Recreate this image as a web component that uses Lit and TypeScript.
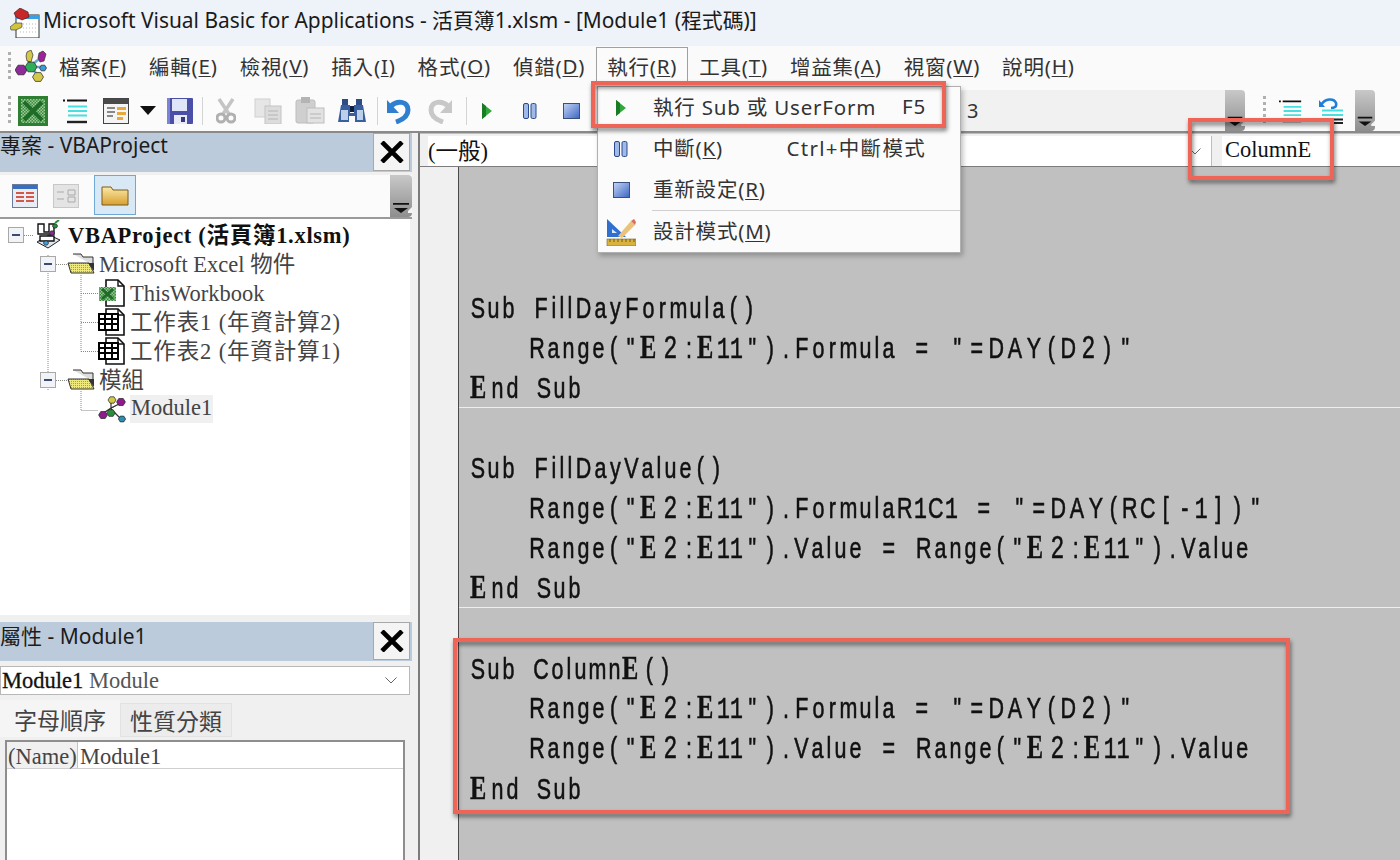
import { LitElement, html, css, svg } from "lit";
import { customElement } from "lit/decorators.js";

const gem = (x: number, y: number, c: string, r = 4) =>
  svg`<polygon points="${x - r},${y} ${x - r / 2},${y - r * 0.8} ${x + r / 2},${y - r * 0.8} ${x + r},${y} ${x + r / 2},${y + r * 0.8} ${x - r / 2},${y + r * 0.8}" fill="${c}" stroke="#222" stroke-width=".7"/>`;

const network = (s: number) => html`<svg width="${s}" height="${s}" viewBox="0 0 32 32">
  <g stroke="#6aa7d8" stroke-width="2.4" fill="none"><path d="M15 16 L8 19 M13 8 L15 15 M18 14 L24 9 M20 17 L27 17 M18 19 L24 27"/></g>
  <polygon points="12,2 16,0 18,5 16,12 12,11 11,6" fill="#d4c84a" stroke="#333" stroke-width=".7"/>
  <polygon points="24,3 28,1 31,4 29,11 25,12 23,8" fill="#a0229a" stroke="#333" stroke-width=".7"/>
  ${gem(6, 20, "#8e2a9a", 6)}${gem(16, 17, "#2fae5a", 6)}${gem(28, 18, "#3a9ad8", 3.5)}${gem(23, 27, "#d4c84a", 5.5)}
</svg>`;

const titleIcon = html`<svg width="30" height="30" viewBox="0 0 30 30">
  <rect x="6" y="7" width="23" height="23" fill="#fff" stroke="#333"/>
  <rect x="6" y="7" width="23" height="4" fill="#3aa0e0"/>
  <path d="M10 16h17M10 20h17M10 24h17" stroke="#bbb" stroke-dasharray="1 2"/>
  <polygon points="4,5 10,0 18,4 19,9 12,12 6,9" fill="#c6282a" stroke="#401010" stroke-width=".6"/>
  <polygon points="0,19 5,15 12,15 12,19 6,22 1,22" fill="#d2c43a" stroke="#333" stroke-width=".6"/>
</svg>`;

const excel = html`<svg width="30" height="30" viewBox="0 0 30 30">
  <defs><pattern id="chk" width="3" height="3" patternUnits="userSpaceOnUse"><rect width="3" height="3" fill="#3c8a3c"/><rect width="1.5" height="1.5" fill="#9ccc9c"/><rect x="1.5" y="1.5" width="1.5" height="1.5" fill="#9ccc9c"/></pattern></defs>
  <rect width="30" height="30" fill="#2f7f33"/><rect x="3" y="3" width="24" height="24" fill="url(#chk)"/>
  <path d="M6 6 L24 24 M24 6 L6 24" stroke="#1f6b28" stroke-width="4"/>
</svg>`;

const indent = (s = 26) => html`<svg width="${s}" height="${s}" viewBox="0 0 26 26">
  <path d="M0 2.5h2M4 2.5h20" stroke="#111" stroke-width="2"/>
  <path d="M5 8.5h19M5 13h19M5 17.5h19" stroke="#47dfe0" stroke-width="2"/>
  <path d="M4 24h20" stroke="#222" stroke-width="2.4"/>
</svg>`;

const windowIcon = html`<svg width="26" height="26" viewBox="0 0 26 26">
  <rect x=".5" y=".5" width="25" height="25" fill="#f4f4f4" stroke="#444"/>
  <rect x="1" y="1" width="24" height="5" fill="#4a4a4a"/>
  <path d="M4 10h8M4 14h8M4 18h6" stroke="#888" stroke-width="2"/>
  <rect x="14" y="9" width="9" height="3" fill="#e8a83a"/><rect x="14" y="14" width="9" height="3" fill="#e8a83a"/><rect x="14" y="19" width="6" height="3" fill="#e8a83a"/>
</svg>`;

const drop = html`<svg width="16" height="9" viewBox="0 0 16 9"><polygon points="0,0 16,0 8,9" fill="#111"/></svg>`;

const save = html`<svg width="26" height="26" viewBox="0 0 26 26">
  <rect width="26" height="26" rx="1" fill="#4a4fa8"/>
  <rect x="5" y="1" width="15" height="12" fill="#dfe6f7"/><rect x="7" y="17" width="13" height="9" fill="#e8ebf5"/>
  <rect x="14" y="19" width="4" height="5" fill="#333a80"/><rect x="0" y="0" width="3" height="26" fill="#7b84d4"/>
</svg>`;

const cut = html`<svg width="20" height="26" viewBox="0 0 20 26">
  <path d="M3 1 L13 16 M17 1 L7 16" stroke="#c4c4c4" stroke-width="3.5"/>
  <circle cx="5" cy="20" r="4" fill="none" stroke="#b0b0b0" stroke-width="3"/><circle cx="15" cy="20" r="4" fill="none" stroke="#b0b0b0" stroke-width="3"/>
</svg>`;

const copy = html`<svg width="28" height="26" viewBox="0 0 28 26">
  <rect x="1" y="1" width="15" height="18" fill="#e6e6e6" stroke="#cfcfcf"/>
  <rect x="11" y="8" width="16" height="18" fill="#dcdcdc" stroke="#c4c4c4"/>
  <path d="M14 13h10M14 17h10M14 21h10" stroke="#b4b4b4"/>
</svg>`;

const paste = html`<svg width="30" height="27" viewBox="0 0 30 27">
  <rect x="1" y="3" width="19" height="23" rx="2" fill="#cfcfcf" stroke="#bdbdbd"/>
  <rect x="6" y="0" width="9" height="6" fill="#b4b4b4"/>
  <rect x="12" y="11" width="17" height="15" fill="#e2e2e2" stroke="#bdbdbd"/>
  <path d="M15 17h11M15 21h11" stroke="#b4b4b4"/>
</svg>`;

const binoculars = html`<svg width="28" height="26" viewBox="0 0 28 26">
  <path d="M4 1h6v6h-6zM18 1h6v6h-6z" fill="#2c4d86"/>
  <path d="M3 7h9v8h4v-8h9l3 17h-11v-6h-6v6h-11z" fill="#3a5f9f"/>
  <path d="M3 12h7v10h-7zM19 12h6v10h-6z" fill="#bcd0ea"/><path d="M12 8h4v6h-4z" fill="#10203f"/>
</svg>`;

const undoIcon = (c1: string, c2: string, cls = "") => html`<svg class="${cls}" width="24" height="26" viewBox="0 0 24 26">
  <path d="M4 8 C10 2 21 3 21 12 C21 19 15 22 9 24" fill="none" stroke="${c1}" stroke-width="5"/>
  <polygon points="0,2 0,15 12,15" fill="${c2}"/>
</svg>`;

const play = (h = 16) => html`<svg width="${h * 0.62}" height="${h}" viewBox="0 0 10 16"><polygon points="0,0 10,8 0,16" fill="#2fa83c"/><polygon points="0,0 4,3 4,13 0,16" fill="#1b7a26"/></svg>`;
const pause = html`<svg width="14" height="16" viewBox="0 0 14 16"><rect x=".5" y=".5" width="5" height="15" rx="1.5" fill="#9fb9e8" stroke="#2a4a8c"/><rect x="8" y=".5" width="5" height="15" rx="1.5" fill="#9fb9e8" stroke="#2a4a8c"/></svg>`;
const stop = html`<svg width="17" height="16" viewBox="0 0 17 16"><defs><linearGradient id="st" x1="0" y1="0" x2="1" y2="1"><stop offset="0" stop-color="#c6d6f4"/><stop offset="1" stop-color="#3c66c4"/></linearGradient></defs><rect x=".5" y=".5" width="16" height="15" fill="url(#st)" stroke="#39507f"/></svg>`;

const design = html`<svg width="30" height="28" viewBox="0 0 30 28">
  <polygon points="1,1 1,19 20,19" fill="#2f6fd0"/><polygon points="6,11 6,15 11,15" fill="#dce8fa"/>
  <path d="M12 18 L25 3 L29 7 L16 20 Z" fill="#e9c27c"/><path d="M25 3l4 4 1-3-2-3z" fill="#d8705a"/>
  <rect x="1" y="21" width="29" height="7" fill="#d8b23c" stroke="#7a6420" stroke-width=".6"/>
  <path d="M4 21v3M8 21v3M12 21v3M16 21v3M20 21v3M24 21v3M28 21v3" stroke="#6a5a20"/>
</svg>`;

const indentOut = html`<svg width="26" height="26" viewBox="0 0 26 26">
  <path d="M2 7 C6 0 15 0 17 5 C18 9 15 10 12 10" fill="none" stroke="#1f7fd8" stroke-width="2.6"/><polygon points="0,2 0,9 6,9" fill="#1f7fd8"/>
  <path d="M3 12.5h21M3 17h21" stroke="#47dfe0" stroke-width="2"/><path d="M10 21.5h14M14 25h10" stroke="#222" stroke-width="1.8"/>
</svg>`;

const grip = html`<svg class="gripper" viewBox="0 0 22 42">
  <path d="M3 28h16v1.8h-16z" fill="#111"/><polygon points="4,33 18,33 11,38" fill="#111"/><polygon points="18,36 22,32 22,38 18,38" fill="#f4f4f4"/>
</svg>`;

const closeBtn = html`<div class="close"><svg width="24" height="22" viewBox="0 0 24 22"><path d="M2 1 L22 21 M22 1 L2 21" stroke="#000" stroke-width="4.6"/></svg></div>`;

const chevron = html`<svg width="12" height="7" viewBox="0 0 12 7"><path d="M.5 .5 L6 6 L11.5 .5" fill="none" stroke="#666"/></svg>`;

const exp = html`<svg class="exp" width="16" height="16" viewBox="0 0 16 16"><rect x=".5" y=".5" width="15" height="15" fill="#f2f3f6" stroke="#a8a8a8"/><rect x="4" y="7" width="8" height="2" fill="#3a4a78"/></svg>`;

const folderOpen = html`<svg width="28" height="22" viewBox="0 0 28 22">
  <defs><pattern id="fy" width="2" height="2" patternUnits="userSpaceOnUse"><rect width="2" height="2" fill="#eee97a"/><rect width="1" height="1" fill="#a8a42c"/></pattern></defs>
  <path d="M6 1h8l2 3h10v7h-2" fill="#ddd" stroke="#333"/>
  <polygon points="1,10 22,10 27,20 4,20" fill="url(#fy)" stroke="#333"/><path d="M21 10h6v8z" fill="#333"/>
</svg>`;

const docExcel = html`<svg width="28" height="28" viewBox="0 0 28 28">
  <path d="M8 1h12l6 6v20h-18z" fill="#fff" stroke="#111" stroke-width="1.6"/><path d="M20 1v6h6" fill="none" stroke="#111" stroke-width="1.4"/>
  <rect x="1" y="8" width="17" height="14" fill="url(#chk)"/><path d="M4 10 L15 20 M15 10 L4 20" stroke="#1f6b28" stroke-width="3"/>
</svg>`;

const sheet = html`<svg width="28" height="28" viewBox="0 0 28 28">
  <path d="M8 1h12l6 6v20h-18z" fill="#fff" stroke="#111" stroke-width="1.6"/><path d="M20 1v6h6" fill="none" stroke="#111" stroke-width="1.4"/>
  <rect x="1" y="6" width="19" height="16" fill="#fff" stroke="#000" stroke-width="2"/>
  <path d="M1 11h19M1 16h19M7 6v16M14 6v16" stroke="#000" stroke-width="2"/>
</svg>`;

const projectIcon = html`<svg width="30" height="30" viewBox="0 0 30 30">
  <path d="M3 22 L14 28 L26 20 L15 15Z" fill="#dfe8f2" stroke="#222"/>
  <path d="M4 4h6v8h5v-8h5v10h-16zM6 16h14v5h-14z" fill="#fff" stroke="#111" stroke-width="1.4"/>
  ${gem(21, 6, "#2a8f3c", 2.6)}${gem(18, 13, "#8e2a9a", 2.6)}${gem(12, 23, "#3aa0d8", 2.6)}
  <path d="M21 3l4-3" stroke="#2a8f3c" stroke-width="2"/>
</svg>`;

const moduleIcon = html`<svg width="28" height="28" viewBox="0 0 28 28">
  <path d="M4 19 L13 13 L23 8 M13 14 L24 25 M13 5 L13 14" stroke="#333" stroke-width="1.2"/>
  ${gem(14, 5, "#d4c84a", 4)}${gem(23, 7, "#8e1a8e", 4.4)}${gem(5, 20, "#8e1a8e", 4.4)}${gem(13, 18, "#2a8f3c", 4.2)}${gem(24, 24, "#2a8fb0", 3.6)}
</svg>`;

const menus: [string, string, string][] = [
  ["檔案(", "F", ")"], ["編輯(", "E", ")"], ["檢視(", "V", ")"], ["插入(", "I", ")"], ["格式(", "O", ")"],
  ["偵錯(", "D", ")"], ["執行(", "R", ")"], ["工具(", "T", ")"], ["增益集(", "A", ")"], ["視窗(", "W", ")"], ["說明(", "H", ")"],
];

type Line = { t: string; ind?: boolean; sep?: boolean };
const code: Line[] = [
  { t: "" }, { t: "" }, { t: "" },
  { t: "Sub FillDayFormula()" },
  { t: 'Range("E2:E11").Formula = "=DAY(D2)"', ind: true },
  { t: "End Sub", sep: true },
  { t: "" },
  { t: "Sub FillDayValue()" },
  { t: 'Range("E2:E11").FormulaR1C1 = "=DAY(RC[-1])"', ind: true },
  { t: 'Range("E2:E11").Value = Range("E2:E11").Value', ind: true },
  { t: "End Sub", sep: true },
  { t: "" },
  { t: "Sub ColumnE()" },
  { t: 'Range("E2:E11").Formula = "=DAY(D2)"', ind: true },
  { t: 'Range("E2:E11").Value = Range("E2:E11").Value', ind: true },
  { t: "End Sub" },
];

// advance of each glyph in the reference's proportional code font, px
const SCALE = 0.74;
const adv: Record<string, number> = {
  i: 8, l: 8, m: 19, r: 13, " ": 16, "(": 15, ")": 17, '"': 19, ":": 16, ".": 14, "=": 20, "-": 20, "[": 18, "]": 21,
  E: 20, "2": 21, "1": 13, S: 16, F: 18, R: 18, V: 17, D: 19, A: 18, Y: 20, C: 18,
};
const glyphs = (t: string) =>
  [...t].map((c) => html`<span class="g ${c === "E" ? "slab" : c === "1" ? "mono" : c === "2" ? "big" : ""}" style="width:${(adv[c] ?? 15) / SCALE}px">${c}</span>`);

@customElement("app-root")
export class AppRoot extends LitElement {
  static styles = css`
    :host { display: block; width: 1400px; height: 860px; overflow: hidden; position: relative; background: #f0f0f0;
      font-family: "Noto Sans", "Noto Sans CJK TC", sans-serif; color: #222; }
    svg { display: block; flex: none; }
    u { text-decoration-thickness: 1px; text-underline-offset: 2px; }
    .page { display: grid; grid-template-rows: 46px 44px 43px 1fr; height: 860px; }
    .title { background: #eef2f9; display: flex; align-items: center; gap: 3px; padding: 0 0 8px 10px; box-sizing: border-box; font-size: 20.9px; color: #1a1a1a; white-space: nowrap; }
    .title svg { margin-top: 8px; }
    .menubar { background: #fafafa; display: flex; align-items: center; font-size: 20.5px; letter-spacing: .8px; color: #333; padding: 0 0 4px 8px; }
    .gripdots { width: 3px; height: 28px; margin-right: 4px; background: repeating-linear-gradient(#b0b0b0 0 3px, transparent 3px 6px); flex: none; }
    .gripdots.tall { height: 30px; }
    .menubar .logo { margin-right: 1px; }
    .mi { padding: 0 10px; height: 38px; display: flex; align-items: center; box-sizing: border-box; border: 1px solid transparent; white-space: nowrap; }
    .mi.on { background: #fbfbfb; border-color: #a0a0a0; border-bottom-color: transparent; }
    .toolbar { display: flex; background: #fafafa; border-bottom: 2px solid #8a8a8a; box-sizing: border-box; height: 43px; }
    .tb { display: flex; align-items: center; height: 41px; background: #fbfbfb; }
    .tb.main { padding-left: 8px; width: 1225px; background: linear-gradient(90deg, #fbfbfb 0 960px, #f1f1f1 960px); box-sizing: border-box; }
    .tb.second { width: 110px; padding-left: 18px; box-sizing: border-box; gap: 0; }
    .slot { display: flex; justify-content: center; flex: none; }
    .w26 { width: 26px; } .w30 { width: 30px; } .w34 { width: 34px; } .w36 { width: 36px; } .w38 { width: 38px; }
    .w40 { width: 40px; } .w42 { width: 42px; } .w44 { width: 44px; } .w46 { width: 46px; } .w52 { width: 52px; }
    .ml4 { margin-left: 4px; }
    .flip { transform: scaleX(-1); }
    .vsep { width: 1px; height: 28px; background: #d4d4d4; flex: none; margin: 0 3px; }
    .pos { margin-left: 381px; font-size: 20px; color: #333; }
    .gripper { background: linear-gradient(#c8c8c8, #8e8e8e); border-radius: 0 4px 4px 0; width: 20px; height: 41px; flex: none; }
    .body { display: grid; grid-template-columns: 412px 8px 1fr; min-height: 0; }
    .left { display: grid; grid-template-rows: 482px 1fr; min-height: 0; }
    .split { background: #f0f0f0; border-right: 2px solid #7c7c7c; box-sizing: border-box; }
    .pane { display: flex; flex-direction: column; min-height: 0; }
    .ptitle { height: 39px; background: #bccbdb; display: flex; align-items: flex-start; justify-content: space-between; font-size: 21px; line-height: 26px; padding: 0 2px 0 0; box-sizing: border-box; color: #1c1c1c; flex: none; white-space: nowrap; }
    .ptitle span { margin-top: -1px; }
    .props .ptitle { margin-top: 7px; }
    .props .ptitle span { margin-top: 1px; }
    .close { width: 37px; height: 38px; background: #f4f4f4; border: 1px solid #a8a8a8; display: flex; align-items: center; justify-content: center; box-sizing: border-box; }
    .ptools { height: 44px; margin-top: 3px; display: flex; align-items: center; justify-content: space-between; background: #fbfbfb; border-bottom: 2px solid #9a9a9a; box-sizing: border-box; flex: none; }
    .ptools .gripper { width: 22px; height: 42px; }
    .ptools .l { display: flex; align-items: center; padding-left: 12px; gap: 15px; height: 100%; }
    .active { width: 42px; height: 40px; margin-top: -3px; background: #d8e8f5; border: 1px solid #6fa8d4; box-sizing: border-box; display: flex; align-items: center; justify-content: center; }
    .tree { position: relative; background: #fff; flex: 1; margin-right: 2px; padding-top: 1px; font-family: "Liberation Serif", "Noto Sans CJK TC", serif; font-size: 22.5px; color: #444; }
    .tree svg.lines { position: absolute; left: 0; top: 0; }
    .row { height: 29px; display: flex; align-items: center; white-space: nowrap; box-sizing: border-box; }
    .row > span { line-height: 1; margin-top: 3px; }
    .row.l0 { padding-left: 34px; font-weight: bold; color: #111; gap: 4px; letter-spacing: .7px; }
    .row.l1 { padding-left: 67px; gap: 4px; }
    .row.l2 { padding-left: 98px; gap: 4px; }
    .cjk { letter-spacing: .85px; }
    .row .exp { position: absolute; }
    .row.l0 .exp { left: 8px; }
    .row.l1 .exp { left: 40px; }
    .row > span.hl { background: #f0f0f0; padding: 0 1px; height: 28px; margin-top: 0; display: flex; align-items: center; }
    .pcombo { height: 29px; margin: 5px 2px 0 0; background: #fff; border: 1px solid #b8b8b8; box-sizing: border-box; display: flex; align-items: center; justify-content: space-between; padding: 0 12px 0 1px; font: 22.5px "Liberation Serif", "Noto Sans CJK TC", serif; color: #555; flex: none; }
    .pcombo b { color: #111; font-weight: normal; -webkit-text-stroke: .3px #111; }
    .tabs { display: flex; font-size: 23px; height: 37px; align-items: flex-end; margin-top: 5px; font-family: "Liberation Serif", "Noto Sans CJK TC", serif; color: #444; flex: none; }
    .tab { height: 37px; width: 120px; display: flex; align-items: center; justify-content: center; background: #f5f5f5; box-sizing: border-box; }
    .tab.off { height: 34px; width: 112px; background: #ececec; border: 1px solid #e2e2e2; }
    .grid { margin: 3px 7px 0 5px; flex: 1; background: #fff; border: 2px solid #8e8e8e; border-bottom: 0; font: 22.5px "Liberation Serif", serif; color: #444; }
    .grow { display: flex; height: 26px; border-bottom: 1px solid #cfcfcf; align-items: center; padding-top: 0; }
    .gk { width: 71px; background: #f0f0f0; height: 100%; border-right: 1px solid #c4c4c4; box-sizing: border-box; display: flex; align-items: center; padding: 3px 0 0 1px; flex: none; white-space: nowrap; }
    .gv { padding: 3px 0 0 2px; }
    .right { display: flex; flex-direction: column; min-height: 0; }
    .combos { height: 34px; flex: none; display: flex; padding: 2px 0 0 8px; border-bottom: 1px solid #7c7c7c; box-sizing: border-box; background: #f0f0f0; gap: 10px; border-top: 1px solid #bdbdbd; font: 22.5px "Liberation Serif", "Noto Sans CJK TC", serif; color: #111; }
    .combo1 { width: 784px; background: #fff; border-right: 1px solid #bdbdbd; display: flex; align-items: center; justify-content: space-between; padding: 0 10px 5px 0; box-sizing: border-box; }
    .combo1 svg { margin-top: 5px; }
    .combo2 { flex: 1; background: #fff; display: flex; align-items: center; padding: 0 0 2px 3px; box-sizing: border-box; }
    .editor { flex: 1; display: flex; min-height: 0; background: #c0c0c0; }
    .margin { width: 38px; background: #f0f0f0; border-right: 1px solid #4a4a4a; flex: none; }
    .code { flex: 1; padding-top: 1px; font-family: "Liberation Sans", sans-serif; font-size: 29px; color: #111; -webkit-text-stroke: .6px #111; }
    .line { height: 40px; box-sizing: border-box; padding-left: 11px; display: flex; align-items: center; white-space: pre; }
    .line.ind { padding-left: 69px; }
    .line.sep { border-bottom: 1px solid #ededed; }
    .chars { display: inline-flex; align-items: baseline; transform: scaleX(.74); transform-origin: left center; }
    .g { display: inline-block; text-align: center; flex: none; }
    .g.slab { font-family: "Liberation Serif", serif; font-weight: bold; font-size: 33px; text-align: left; -webkit-text-stroke: .4px #111; }
    .g.mono { font-family: "Liberation Mono", monospace; }
    .g.big { font-size: 31px; }
    .menu { position: absolute; left: 597px; top: 86px; width: 364px; height: 167px; background: #fbfbfb; border: 1px solid #b0b0b0; box-sizing: border-box; box-shadow: 2px 3px 5px rgba(0,0,0,.25); font-size: 20.5px; letter-spacing: .8px; color: #333; }
    .mrow { display: grid; grid-template-columns: 55px 1fr auto; align-items: center; height: 41px; padding-right: 34px; }
    .mrow > div:not(.ic) { margin-top: -4px; }
    .mrow .ic { display: flex; justify-content: center; width: 46px; }
    .wide { letter-spacing: 1.3px; }
    .msep { height: 1px; background: #d0d0d0; margin-left: 54px; }
    .mark { position: absolute; border: 4px solid #ee6557; box-sizing: border-box; filter: drop-shadow(1px 3px 2px rgba(0,0,0,.5)); pointer-events: none; }
    .m1 { left: 591px; top: 81px; width: 355px; height: 47px; }
    .m2 { left: 1188px; top: 118px; width: 146px; height: 62px; }
    .m3 { left: 453px; top: 638px; width: 837px; height: 176px; }
  `;

  render() {
    return html`
      <div class="page">
        <div class="title">${titleIcon}<span>Microsoft Visual Basic for Applications - 活頁簿1.xlsm - [Module1 (程式碼)]</span></div>
        <div class="menubar">
          <div class="gripdots"></div>
          <div class="logo">${network(32)}</div>
          ${menus.map(([a, k, b]) => html`<div class="mi ${k === "R" ? "on" : ""}">${a}<u>${k}</u>${b}</div>`)}
        </div>
        <div class="toolbar">
          <div class="tb main">
            <div class="gripdots tall"></div>
            <div class="slot w36">${excel}</div>
            <div class="slot w42 ml4">${indent()}</div>
            <div class="slot w38">${windowIcon}</div>
            <div class="slot w26">${drop}</div>
            <div class="slot w38">${save}</div>
            <div class="vsep"></div>
            <div class="slot w40">${cut}</div>
            <div class="slot w44">${copy}</div>
            <div class="slot w40">${paste}</div>
            <div class="slot w44">${binoculars}</div>
            <div class="vsep"></div>
            <div class="slot w36">${undoIcon("#2f7fd0", "#2f7fd0")}</div>
            <div class="slot w46">${undoIcon("#c8c8c8", "#c8c8c8", "flip")}</div>
            <div class="vsep"></div>
            <div class="slot w34">${play()}</div>
            <div class="slot w52">${pause}</div>
            <div class="slot w30">${stop}</div>
            <div class="pos">3</div>
          </div>
          ${grip}
          <div class="tb second">
            <div class="gripdots tall"></div>
            <div class="slot w42">${indent(24)}</div>
            <div class="slot w40">${indentOut}</div>
          </div>
          ${grip}
        </div>
        <div class="body">
          <div class="left">
            <div class="pane">
              <div class="ptitle"><span>專案 - VBAProject</span>${closeBtn}</div>
              <div class="ptools">
                <div class="l">
                  <svg width="26" height="24" viewBox="0 0 26 24"><rect x=".5" y=".5" width="25" height="23" fill="#e8ecf4" stroke="#6a7a9a"/><rect x="1" y="1" width="24" height="4" fill="#3a6fc0"/><path d="M4 9h8M14 9h8M4 13h8M14 13h8M4 17h8M14 17h8" stroke="#d4584a" stroke-width="2"/></svg>
                  <svg width="26" height="24" viewBox="0 0 26 24"><rect x=".5" y=".5" width="25" height="23" fill="#e4e4e4" stroke="#c8c8c8"/><path d="M4 8h7M15 6h7v5h-7zM4 15h7M15 13h7v5h-7z" stroke="#aaa" fill="none"/></svg>
                  <div class="active"><svg width="28" height="22" viewBox="0 0 28 22"><defs><linearGradient id="fg" x1="0" y1="0" x2="0" y2="1"><stop offset="0" stop-color="#fbe9a8"/><stop offset="1" stop-color="#d8a030"/></linearGradient></defs><path d="M1 3h9l2 3h15v15h-26z" fill="url(#fg)" stroke="#7a5a1a"/></svg></div>
                </div>
                ${grip}
              </div>
              <div class="tree">
                <svg class="lines" width="140" height="200" viewBox="0 0 140 200" fill="none" stroke="#888" stroke-dasharray="1 1">
                  <path d="M24 16.5h10M48 36v136M56 45.5h11M56 161.5h11M81 56v76.5M81 74.5h17M81 103.5h17M81 132.5h17M81 172v19.5h17"/>
                </svg>
                <div class="row l0">${exp}${projectIcon}<span>VBAProject (活頁簿1.xlsm)</span></div>
                <div class="row l1">${exp}${folderOpen}<span>Microsoft Excel 物件</span></div>
                <div class="row l2">${docExcel}<span>ThisWorkbook</span></div>
                <div class="row l2">${sheet}<span class="cjk">工作表1 (年資計算2)</span></div>
                <div class="row l2">${sheet}<span class="cjk">工作表2 (年資計算1)</span></div>
                <div class="row l1">${exp}${folderOpen}<span>模組</span></div>
                <div class="row l2">${moduleIcon}<span class="hl">Module1</span></div>
              </div>
            </div>
            <div class="pane props">
              <div class="ptitle"><span>屬性 - Module1</span>${closeBtn}</div>
              <div class="pcombo"><span><b>Module1</b> Module</span>${chevron}</div>
              <div class="tabs"><div class="tab">字母順序</div><div class="tab off">性質分類</div></div>
              <div class="grid"><div class="grow"><div class="gk">(Name)</div><div class="gv">Module1</div></div></div>
            </div>
          </div>
          <div class="split"></div>
          <div class="right">
            <div class="combos">
              <div class="combo1"><span>(一般)</span>${chevron}</div>
              <div class="combo2">ColumnE</div>
            </div>
            <div class="editor">
              <div class="margin"></div>
              <div class="code">
                ${code.map((l) => html`<div class="line ${l.ind ? "ind" : ""} ${l.sep ? "sep" : ""}"><span class="chars">${glyphs(l.t)}</span></div>`)}
              </div>
            </div>
          </div>
        </div>
      </div>
      <div class="menu">
        <div class="mrow"><div class="ic">${play()}</div><div>執行 Sub 或 UserForm</div><div>F5</div></div>
        <div class="mrow"><div class="ic">${pause}</div><div>中斷(<u>K</u>)</div><div class="wide">Ctrl+中斷模式</div></div>
        <div class="mrow"><div class="ic">${stop}</div><div>重新設定(<u>R</u>)</div><div></div></div>
        <div class="msep"></div>
        <div class="mrow"><div class="ic">${design}</div><div>設計模式(<u>M</u>)</div><div></div></div>
      </div>
      <div class="mark m1"></div>
      <div class="mark m2"></div>
      <div class="mark m3"></div>
    `;
  }
}
